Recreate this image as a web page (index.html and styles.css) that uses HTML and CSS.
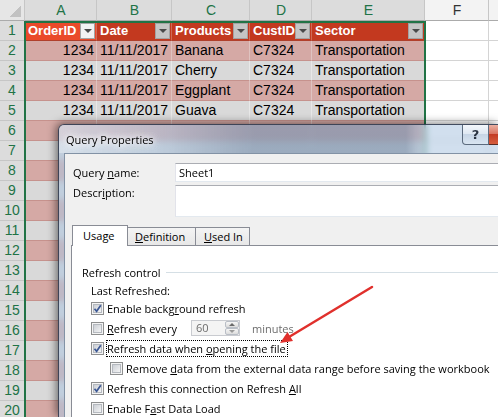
FILE: index.html
```html
<!DOCTYPE html>
<html>
    <head>
        <meta http-equiv="Content-Type" content="text/html; charset=UTF-8">
        <title>Query Properties</title>
        <link rel="stylesheet" href="styles.css">
    </head>
    <body>
        <div class="sheet">
            <!-- column letters -->
            <div class="row colhdr">
                <div class="corner"></div>
                <div class="sel">A</div><div class="sel">B</div><div class="sel">C</div><div class="sel">D</div><div class="sel">E</div><div>F</div><div></div>
            </div>
            <!-- table header -->
            <div class="row th-row">
                <div class="rh">1</div>
                <div class="th active">OrderID<span class="dd"></span></div>
                <div class="th">Date<span class="dd"></span></div>
                <div class="th">Products<span class="dd"></span></div>
                <div class="th">CustID<span class="dd"></span></div>
                <div class="th">Sector<span class="dd"></span></div>
                <div class="o"></div><div class="o"></div>
            </div>
            <div class="row pink">
                <div class="rh">2</div><div class="t num">1234</div><div class="t">11/11/2017</div><div class="t">Banana</div><div class="t">C7324</div><div class="t">Transportation</div><div class="o"></div><div class="o"></div>
            </div>
            <div class="row gray">
                <div class="rh">3</div><div class="t num">1234</div><div class="t">11/11/2017</div><div class="t">Cherry</div><div class="t">C7324</div><div class="t">Transportation</div><div class="o"></div><div class="o"></div>
            </div>
            <div class="row pink">
                <div class="rh">4</div><div class="t num">1234</div><div class="t">11/11/2017</div><div class="t">Eggplant</div><div class="t">C7324</div><div class="t">Transportation</div><div class="o"></div><div class="o"></div>
            </div>
            <div class="row gray">
                <div class="rh">5</div><div class="t num">1234</div><div class="t">11/11/2017</div><div class="t">Guava</div><div class="t">C7324</div><div class="t">Transportation</div><div class="o"></div><div class="o"></div>
            </div>
            <!-- rows under the dialog -->
            <div class="row pink"><div class="rh">6</div><div class="t"></div><div class="t"></div><div class="t"></div><div class="t"></div><div class="t"></div><div class="o"></div><div class="o"></div></div>
            <div class="row gray"><div class="rh">7</div><div class="t"></div><div class="t"></div><div class="t"></div><div class="t"></div><div class="t"></div><div class="o"></div><div class="o"></div></div>
            <div class="row pink"><div class="rh">8</div><div class="t"></div><div class="t"></div><div class="t"></div><div class="t"></div><div class="t"></div><div class="o"></div><div class="o"></div></div>
            <div class="row gray"><div class="rh">9</div><div class="t"></div><div class="t"></div><div class="t"></div><div class="t"></div><div class="t"></div><div class="o"></div><div class="o"></div></div>
            <div class="row pink"><div class="rh">10</div><div class="t"></div><div class="t"></div><div class="t"></div><div class="t"></div><div class="t"></div><div class="o"></div><div class="o"></div></div>
            <div class="row gray"><div class="rh">11</div><div class="t"></div><div class="t"></div><div class="t"></div><div class="t"></div><div class="t"></div><div class="o"></div><div class="o"></div></div>
            <div class="row pink"><div class="rh">12</div><div class="t"></div><div class="t"></div><div class="t"></div><div class="t"></div><div class="t"></div><div class="o"></div><div class="o"></div></div>
            <div class="row gray"><div class="rh">13</div><div class="t"></div><div class="t"></div><div class="t"></div><div class="t"></div><div class="t"></div><div class="o"></div><div class="o"></div></div>
            <div class="row pink"><div class="rh">14</div><div class="t"></div><div class="t"></div><div class="t"></div><div class="t"></div><div class="t"></div><div class="o"></div><div class="o"></div></div>
            <div class="row gray"><div class="rh">15</div><div class="t"></div><div class="t"></div><div class="t"></div><div class="t"></div><div class="t"></div><div class="o"></div><div class="o"></div></div>
            <div class="row pink"><div class="rh">16</div><div class="t"></div><div class="t"></div><div class="t"></div><div class="t"></div><div class="t"></div><div class="o"></div><div class="o"></div></div>
            <div class="row gray"><div class="rh">17</div><div class="t"></div><div class="t"></div><div class="t"></div><div class="t"></div><div class="t"></div><div class="o"></div><div class="o"></div></div>
            <div class="row pink"><div class="rh">18</div><div class="t"></div><div class="t"></div><div class="t"></div><div class="t"></div><div class="t"></div><div class="o"></div><div class="o"></div></div>
            <div class="row gray"><div class="rh">19</div><div class="t"></div><div class="t"></div><div class="t"></div><div class="t"></div><div class="t"></div><div class="o"></div><div class="o"></div></div>
            <div class="row pink last-row"><div class="rh">20</div><div class="t"></div><div class="t"></div><div class="t"></div><div class="t"></div><div class="t"></div><div class="o"></div><div class="o"></div></div>

            <div class="selection"></div>
        </div>

        <svg class="defs" width="0" height="0">
            <defs>
                <linearGradient id="cbfill" x1="0" y1="0" x2="1" y2="1">
                    <stop offset="0" stop-color="#c9cdd3"/>
                    <stop offset="1" stop-color="#f7f7f7"/>
                </linearGradient>
            </defs>
        </svg>

        <div class="dialog">
            <div class="titlebar">
                <div class="title">Query Properties</div>
                <div class="caps">
                    <div class="help">?</div>
                    <div class="close"></div>
                </div>
            </div>
            <div class="client">
                <div class="fields">
                    <div class="field">
                        <span>Query <u>n</u>ame:</span>
                        <div class="input">Sheet1</div>
                    </div>
                    <div class="field top">
                        <span>Descr<u>i</u>ption:</span>
                        <div class="input tall"></div>
                    </div>
                </div>
                <div class="tabbox">
                    <div class="tabs">
                        <div class="tab sel">Usa<u>g</u>e</div>
                        <div class="tab def"><u>D</u>efinition</div>
                        <div class="tab used"><u>U</u>sed In</div>
                    </div>
                    <div class="panel">
                        <div class="group-title"><span>Refresh control</span><div class="line"></div></div>
                        <div class="group">
                            <div class="last">Last Refreshed:</div>
                            <div class="opt">
                                <svg class="cb" viewBox="0 0 13 13"><rect x=".5" y=".5" width="12" height="12" fill="#f4f4f4" stroke="#8e8f8f"/><rect x="2.5" y="2.5" width="8" height="8" fill="url(#cbfill)" stroke="#b5b9bf"/><path d="M3.5 6.8 L5.6 9.3 L9.8 3.2" fill="none" stroke="#3c5894" stroke-width="1.7"/></svg>
                                <span>Enable backg<u>r</u>ound refresh</span>
                            </div>
                            <div class="opt">
                                <svg class="cb" viewBox="0 0 13 13"><rect x=".5" y=".5" width="12" height="12" fill="#f4f4f4" stroke="#8e8f8f"/><rect x="2.5" y="2.5" width="8" height="8" fill="url(#cbfill)" stroke="#b5b9bf"/></svg>
                                <span class="every"><u>R</u>efresh every</span>
                                <div class="spin">
                                    <div class="spin-val">60</div>
                                    <div class="spin-btns"><div class="sb up"></div><div class="sb down"></div></div>
                                </div>
                                <span class="muted">minutes</span>
                            </div>
                            <div class="opt">
                                <svg class="cb" viewBox="0 0 13 13"><rect x=".5" y=".5" width="12" height="12" fill="#f4f4f4" stroke="#8e8f8f"/><rect x="2.5" y="2.5" width="8" height="8" fill="url(#cbfill)" stroke="#b5b9bf"/><path d="M3.5 6.8 L5.6 9.3 L9.8 3.2" fill="none" stroke="#3c5894" stroke-width="1.7"/></svg>
                                <span class="focus">Refresh data when <u>o</u>pening the file</span>
                            </div>
                            <div class="opt sub">
                                <svg class="cb" viewBox="0 0 13 13"><rect x=".5" y=".5" width="12" height="12" fill="#f4f4f4" stroke="#8e8f8f"/><rect x="2.5" y="2.5" width="8" height="8" fill="url(#cbfill)" stroke="#b5b9bf"/></svg>
                                <span>Remove <u>d</u>ata from the external data range before saving the workbook</span>
                            </div>
                            <div class="opt">
                                <svg class="cb" viewBox="0 0 13 13"><rect x=".5" y=".5" width="12" height="12" fill="#f4f4f4" stroke="#8e8f8f"/><rect x="2.5" y="2.5" width="8" height="8" fill="url(#cbfill)" stroke="#b5b9bf"/><path d="M3.5 6.8 L5.6 9.3 L9.8 3.2" fill="none" stroke="#3c5894" stroke-width="1.7"/></svg>
                                <span>Refresh this connection on Refresh <u>A</u>ll</span>
                            </div>
                            <div class="opt">
                                <svg class="cb" viewBox="0 0 13 13"><rect x=".5" y=".5" width="12" height="12" fill="#f4f4f4" stroke="#8e8f8f"/><rect x="2.5" y="2.5" width="8" height="8" fill="url(#cbfill)" stroke="#b5b9bf"/></svg>
                                <span>Enable F<u>a</u>st Data Load</span>
                            </div>
                        </div>
                    </div>
                </div>
            </div>
        </div>

        <!-- red annotation arrow -->
        <svg class="arrow" width="498" height="417" viewBox="0 0 498 417">
            <line x1="372" y1="287" x2="289" y2="337" stroke="#e0302c" stroke-width="2.5" stroke-linecap="round"/>
            <polygon points="280,343 293,341 287.5,332" fill="#e0302c"/>
        </svg>
    </body>
</html>
```

FILE: styles.css
```css
/* page */
body {
    margin: 0;
    width: 498px;
    height: 417px;
    overflow: hidden;
    position: relative;
    background: #fff;
    font-family: "Liberation Sans", Arial, sans-serif;
    font-size: 14px;
    color: #000;
}

/* spreadsheet */
.sheet {
    position: relative;
    height: 417px;
    overflow: hidden;
}
.row {
    display: grid;
    grid-template-columns: 25px 72px 75px 78px 62px 113px 64px 9px;
    height: 20px;
}
.row.last-row {
    height: 16px;
}
.row > div {
    box-sizing: border-box;
    border-right: 1px solid #d4d4d4;
    border-bottom: 1px solid #d4d4d4;
    line-height: 19px;
    padding: 0 2px 0 3px;
    white-space: nowrap;
    overflow: hidden;
}
.row > div:last-child {
    border-right: none;
}
.last-row > div {
    border-bottom: none;
}
.colhdr {
    height: 21px;
}
.colhdr > div {
    background: #f3f3f3;
    border-right-color: #c6c6c6;
    border-bottom-color: #ababab;
    text-align: center;
    line-height: 20px;
    color: #333;
}
.colhdr > .sel {
    background: #dcdcdc;
    color: #217346;
}
.colhdr > .corner {
    background: linear-gradient(135deg, transparent 50%, #c2c2c2 50%) no-repeat right 3px bottom 3px / 11px 11px, #e6e6e6;
}
.row > .rh {
    background: #dcdcdc;
    color: #217346;
    text-align: center;
    padding: 0;
    border-right-color: #c6c6c6;
    border-bottom-color: #c6c6c6;
}
.row > .o {
    background: #fff;
}
.pink > .t {
    background: #d5a9a5;
    border-bottom-color: #c6928d;
    border-right-color: #dfc3c0;
}
.gray > .t {
    background: #d9d9d9;
    border-bottom-color: #c6928d;
    border-right-color: #e8e8e8;
}
.row > .num {
    text-align: right;
}
.th-row > .th {
    background: #c3391f;
    color: #fff;
    font-weight: bold;
    font-size: 13px;
    display: flex;
    align-items: center;
    justify-content: space-between;
    padding: 0 1px 0 3px;
    border-right-color: #cf6a56;
    border-bottom-color: #b0402c;
}
.th-row > .th.active {
    background: #ea4a2a;
}
.dd {
    width: 15px;
    height: 16px;
    box-sizing: border-box;
    background: #c5c5c5;
    border: 1px solid #a3a3a3;
    display: flex;
    align-items: center;
    justify-content: center;
    flex: none;
}
.dd::after {
    content: "";
    border-left: 4px solid transparent;
    border-right: 4px solid transparent;
    border-top: 4px solid #4a4a4a;
}
.active .dd {
    background: #f2f2f2;
}
.selection {
    position: absolute;
    left: 24px;
    top: 21px;
    width: 402px;
    height: 396px;
    box-sizing: border-box;
    border: 2px solid #217346;
    border-bottom: none;
    pointer-events: none;
}

.defs {
    position: absolute;
}

/* dialog (cut off by the window edge, like the screenshot) */
.dialog {
    position: absolute;
    left: 58px;
    top: 124px;
    width: 440px;
    height: 293px;
    box-sizing: border-box;
    border: 1px solid rgba(30, 40, 60, 0.8);
    border-right: none;
    border-bottom: none;
    border-radius: 6px 0 0 0;
    background: rgba(172, 196, 224, 0.55);
    backdrop-filter: blur(3px);
    box-shadow: -2px -1px 8px rgba(0, 0, 0, 0.5);
    display: flex;
    flex-direction: column;
    font-family: "Open Sans", sans-serif;
    font-size: 11px;
}
.titlebar {
    height: 28px;
    flex: none;
    display: flex;
    align-items: flex-start;
    padding-left: 7px;
    border-radius: 5px 0 0 0;
    background: linear-gradient(to right, rgba(255,255,255,0.35) 0, rgba(255,255,255,0) 22%, rgba(60,80,110,0.28) 44%, rgba(60,80,110,0.28) 79%, rgba(60,80,110,0) 83%);
}
.title {
    margin-top: 7px;
    line-height: 15px;
    text-shadow: 0 0 6px #fff, 0 0 6px #fff, 0 0 10px #fff;
}
.caps {
    margin-left: auto;
    display: flex;
}
.help {
    width: 27px;
    height: 20px;
    box-sizing: border-box;
    border: 1px solid #5c6b7e;
    border-top: none;
    border-radius: 0 0 0 4px;
    background: linear-gradient(#f4f7fb, #dfe8f2 45%, #c7d5e5 50%, #d9e5f1);
    text-align: center;
    font-family: "DejaVu Sans", sans-serif;
    font-weight: bold;
    font-size: 13px;
    line-height: 19px;
    color: #2b3442;
}
.close {
    width: 9px;
    height: 20px;
    box-sizing: border-box;
    border-bottom: 1px solid #5a2a22;
    background: linear-gradient(#eab0a2, #da7663 45%, #c43c25 50%, #d65d3e);
}
.client {
    flex: 1;
    margin-left: 5px;
    background: #f0f0f0;
    border: 1px solid #8292a5;
    border-right: none;
    border-bottom: none;
    display: flex;
    flex-direction: column;
    min-height: 0;
}
.fields {
    padding: 9px 0 0 8px;
}
.field {
    display: grid;
    grid-template-columns: 102px 1fr;
    align-items: center;
    line-height: 15px;
}
.field + .field {
    margin-top: 3px;
}
.field.top {
    align-items: start;
}
.input {
    height: 19px;
    box-sizing: border-box;
    background: #fff;
    border: 1px solid;
    border-color: #abadb3 #dbdfe6 #e3e9ef #e2e3ea;
    border-right: none;
    padding: 0 3px;
    line-height: 17px;
}
.input.tall {
    height: 32px;
}
.tabbox {
    flex: 1;
    margin: 8px 0 0 6px;
    display: flex;
    flex-direction: column;
    min-height: 0;
}
.tabs {
    display: flex;
    align-items: flex-end;
    height: 20px;
    flex: none;
    padding-left: 1px;
    position: relative;
    z-index: 1;
}
.tab {
    height: 18px;
    box-sizing: border-box;
    border: 1px solid #898c95;
    border-bottom: none;
    background: linear-gradient(#f4f4f4, #e7e7e7);
    display: flex;
    align-items: center;
    padding-left: 7px;
    margin-left: -1px;
}
.tab.sel {
    height: 21px;
    margin-bottom: -1px;
    margin-left: 0;
    background: #fff;
    padding-left: 10px;
    padding-bottom: 2px;
    width: 56px;
    position: relative;
    z-index: 2;
}
.tab.def {
    width: 69px;
}
.tab.used {
    width: 55px;
    padding-left: 8px;
}
.panel {
    flex: 1;
    min-height: 0;
    overflow: hidden;
    background: #fff;
    border: 1px solid #898c95;
    border-right: none;
    border-bottom: none;
    padding: 17px 0 0 10px;
}
.group-title {
    display: flex;
    align-items: center;
    height: 18px;
}
.group-title .line {
    flex: 1;
    height: 1px;
    background: #d5dfe5;
    margin-left: 5px;
}
.group {
    padding-left: 9px;
}
.last {
    margin-top: 3px;
    height: 14px;
    line-height: 14px;
}
.opt {
    display: flex;
    align-items: center;
    height: 20px;
    white-space: nowrap;
}
.opt.sub {
    padding-left: 19px;
}
.cb {
    width: 13px;
    height: 13px;
    flex: none;
    margin-right: 3px;
}
.every {
    width: 84px;
}
.spin {
    width: 49px;
    height: 16px;
    box-sizing: border-box;
    border: 1px solid #c9cbd0;
    background: #f4f4f4;
    display: flex;
}
.spin-val {
    flex: 1;
    color: #6d6d6d;
    padding-left: 4px;
    line-height: 14px;
}
.spin-btns {
    width: 14px;
    display: flex;
    flex-direction: column;
}
.sb {
    flex: 1;
    box-sizing: border-box;
    border: 1px solid #b9bec6;
    border-radius: 2px;
    background: linear-gradient(#f6f6f6, #dcdcdc);
    display: flex;
    align-items: center;
    justify-content: center;
}
.sb.up::after {
    content: "";
    border-left: 3px solid transparent;
    border-right: 3px solid transparent;
    border-bottom: 3px solid #6a6a6a;
}
.sb.down::after {
    content: "";
    border-left: 3px solid transparent;
    border-right: 3px solid transparent;
    border-top: 3px solid #9a9a9a;
}
.muted {
    margin-left: 12px;
    color: #6d6d6d;
}
.focus {
    outline: 1px dotted #000;
    padding: 0 1px 0 0;
    line-height: 15px;
}

/* annotation */
.arrow {
    position: absolute;
    left: 0;
    top: 0;
    pointer-events: none;
}
```
